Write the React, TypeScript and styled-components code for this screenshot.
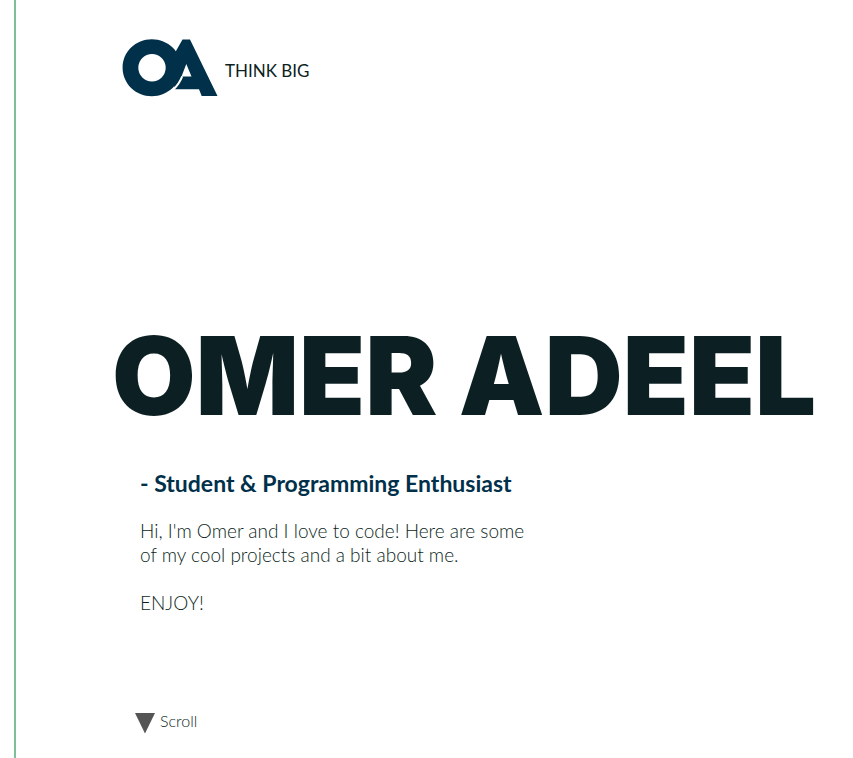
import React from "react";
import styled, { createGlobalStyle } from "styled-components";

const GlobalStyle = createGlobalStyle`
  * { box-sizing: border-box; }
  body {
    margin: 0;
    background: #ffffff;
    color: #0c1f22;
    font-family: Lato, "Open Sans", sans-serif;
  }
`;

const Page = styled.div`
  min-height: 100vh;
  margin-left: 14px;
  padding: 38px 0 24px 96px;
  border-left: 2px solid #7fbf97;
  display: flex;
  flex-direction: column;
`;

const Header = styled.header`
  display: flex;
  align-items: center;
  gap: 7px;
  padding-left: 10px;
`;

const Logo = styled.svg`
  display: block;
  width: 96px;
  height: 60px;
`;

const Tagline = styled.span`
  font-size: 17px;
  line-height: 24px;
  padding-top: 6px;
`;

const Main = styled.main`
  margin-top: 216px;
`;

const Name = styled.h1`
  margin: 0;
  font-family: Inter, "Liberation Sans", sans-serif;
  font-size: 108px;
  font-weight: 900;
  line-height: 124px;
  white-space: nowrap;
`;

const Intro = styled.section`
  margin-top: 29px;
  padding-left: 28px;
`;

const Role = styled.h2`
  margin: 0 0 20px;
  color: #00304a;
  font-size: 23px;
  font-weight: 700;
  line-height: 32px;
`;

const Copy = styled.p`
  margin: 0 0 24px;
  font-size: 19px;
  font-weight: 300;
  line-height: 24px;
`;

const ScrollLink = styled.a`
  align-self: flex-start;
  display: flex;
  align-items: flex-start;
  gap: 5px;
  margin-top: auto;
  padding-left: 23px;
  color: inherit;
  font-size: 16px;
  font-weight: 300;
  line-height: 16px;
  text-decoration: none;
`;

const Arrow = styled.svg`
  display: block;
  width: 20px;
  height: 21px;
`;

export default function App() {
  return (
    <>
      <GlobalStyle />
      <Page>
        <Header>
          <Logo viewBox="0 0 96 60" role="img" aria-label="OA">
            <path
              fill="#00304a"
              fillRule="evenodd"
              d="M60.5 1.5H68L95.5 58H79.7L77 51.3H52.5L50 20ZM64.3 26L59.5 38.4H69.5Z"
            />
            <path d="M60.2 38.4C58.5 43 55.5 47.5 51 52" fill="none" stroke="#fff" strokeWidth="2" />
            <path
              fill="#00304a"
              fillRule="evenodd"
              d="M29.8 1.3C46 1.3 59.4 14 59.4 29.7S46 58.2 29.8 58.2.6 45.5.6 29.7 13.6 1.3 29.8 1.3ZM30 16A13.7 13.7 0 1 0 30 43.4A13.7 13.7 0 1 0 30 16Z"
            />
          </Logo>
          <Tagline>THINK BIG</Tagline>
        </Header>
        <Main>
          <Name>OMER ADEEL</Name>
          <Intro id="intro">
            <Role>- Student &amp; Programming Enthusiast</Role>
            <Copy>
              Hi, I'm Omer and I love to code! Here are some
              <br />
              of my cool projects and a bit about me.
            </Copy>
            <Copy>ENJOY!</Copy>
          </Intro>
        </Main>
        <ScrollLink href="#intro">
          <Arrow viewBox="0 0 20 21" aria-hidden="true">
            <path fill="#555" d="M0 0H20L10 20.5Z" />
          </Arrow>
          Scroll
        </ScrollLink>
      </Page>
    </>
  );
}
